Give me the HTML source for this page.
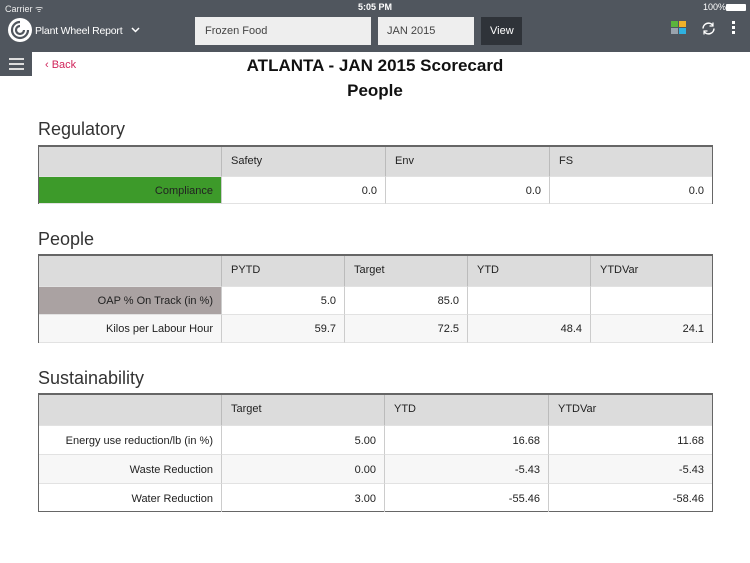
<!DOCTYPE html>
<html><head><meta charset="utf-8"><style>
*{margin:0;padding:0;box-sizing:border-box}
body{width:750px;height:563px;background:#fff;font-family:"Liberation Sans",Arial,sans-serif;position:relative;overflow:hidden;color:#222}
.bar{position:absolute;left:0;top:0;width:750px;height:52px;background:#50565e}
.abs{position:absolute}
.tbl{position:absolute;border:1px solid #666;border-top:2px solid #666}
.c{position:absolute;font-size:11px;line-height:1;border-right:1px solid #ccc;border-bottom:1px solid #e2e2e2}
.h{background:#dcdcdc;padding:9px 0 0 9px;border-right:1px solid #bbb}
.r{text-align:right;padding-right:8px}
h2{position:absolute;font-weight:normal;font-size:18px;color:#333;left:38px}
</style></head><body>
<div class="bar"></div>
<div class="abs" style="left:0;top:52px;width:32px;height:24px;background:#50565e"></div>
<div class="abs" style="left:9px;top:58px;width:15px;height:2px;background:#ddd;box-shadow:0 5px 0 #ddd,0 10px 0 #ddd"></div>
<div class="abs" style="left:5px;top:2px;font-size:9px;color:#eee">Carrier ᯤ</div>
<div class="abs" style="left:358px;top:2px;font-size:9px;color:#fff;font-weight:bold">5:05 PM</div>
<div class="abs" style="left:703px;top:2px;font-size:9px;color:#fff">100%</div>
<div class="abs" style="left:726px;top:4px;width:20px;height:7px;background:#fff;border-radius:1px"></div>
<svg class="abs" style="left:7px;top:17px" width="26" height="26" viewBox="0 0 26 26"><circle cx="13" cy="13" r="12" fill="#fff"/><path d="M13 5a8 8 0 1 0 8 8M13 9a4 4 0 1 0 4 4" stroke="#50565e" stroke-width="2.2" fill="none"/></svg>
<div class="abs" style="left:35px;top:25px;font-size:10.5px;color:#fff;letter-spacing:-0.2px">Plant Wheel Report</div>
<svg class="abs" style="left:131px;top:27px" width="9" height="6"><path d="M1 1l3.5 3.5L8 1" stroke="#fff" stroke-width="1.5" fill="none"/></svg>
<div class="abs" style="left:195px;top:17px;width:176px;height:28px;background:#eee;font-size:11px;color:#444;padding:8px 0 0 10px">Frozen Food</div>
<div class="abs" style="left:378px;top:17px;width:96px;height:28px;background:#eee;font-size:11px;color:#444;padding:8px 0 0 9px">JAN 2015</div>
<div class="abs" style="left:481px;top:17px;width:41px;height:28px;background:#2f3339;font-size:11px;color:#fff;padding:8px 0 0 9px">View</div>
<div class="abs" style="left:671px;top:21px;width:7px;height:6px;background:#5bb53c"></div>
<div class="abs" style="left:679px;top:21px;width:7px;height:6px;background:#f0b12a"></div>
<div class="abs" style="left:671px;top:28px;width:7px;height:6px;background:#9aa3ad"></div>
<div class="abs" style="left:679px;top:28px;width:7px;height:6px;background:#2fb1e0"></div>
<svg class="abs" style="left:701px;top:21px" width="15" height="15" viewBox="0 0 15 15"><path d="M2 7.5A5.5 5.5 0 0 1 12 4.5M13 7.5A5.5 5.5 0 0 1 3 10.5" stroke="#fff" stroke-width="1.5" fill="none"/><path d="M12 1.5v3.5h-3.5M3 13.5v-3.5h3.5" stroke="#fff" stroke-width="1.2" fill="none"/></svg>
<div class="abs" style="left:732px;top:21px;width:3px;height:3px;background:#fff;box-shadow:0 5px 0 #fff,0 10px 0 #fff"></div>
<div class="abs" style="left:45px;top:59px;font-size:11px;color:#d0245a">‹ Back</div>
<div class="abs" style="left:0;top:56px;width:750px;text-align:center;font-size:17px;font-weight:bold;color:#111">ATLANTA - JAN 2015 Scorecard</div>
<div class="abs" style="left:0;top:81px;width:750px;text-align:center;font-size:17px;font-weight:bold;color:#111">People</div>

<h2 style="top:119px">Regulatory</h2>
<div class="tbl" style="left:38px;top:145px;width:675px;height:59px">
<div class="c h" style="left:0;top:0;width:183px;height:30px"></div>
<div class="c h" style="left:183px;top:0;width:164px;height:30px">Safety</div>
<div class="c h" style="left:347px;top:0;width:164px;height:30px">Env</div>
<div class="c h" style="left:511px;top:0;width:162px;height:30px;border-right:0">FS</div>
<div class="c r" style="left:0;top:30px;width:183px;height:27px;background:#3d9a2a;padding-top:9px">Compliance</div>
<div class="c r" style="left:183px;top:30px;width:164px;height:27px;padding-top:9px">0.0</div>
<div class="c r" style="left:347px;top:30px;width:164px;height:27px;padding-top:9px">0.0</div>
<div class="c r" style="left:511px;top:30px;width:162px;height:27px;padding-top:9px;border-right:0">0.0</div>
</div>

<h2 style="top:229px">People</h2>
<div class="tbl" style="left:38px;top:254px;width:675px;height:89px">
<div class="c h" style="left:0;top:0;width:183px;height:31px"></div>
<div class="c h" style="left:183px;top:0;width:123px;height:31px">PYTD</div>
<div class="c h" style="left:306px;top:0;width:123px;height:31px">Target</div>
<div class="c h" style="left:429px;top:0;width:123px;height:31px">YTD</div>
<div class="c h" style="left:552px;top:0;width:121px;height:31px;border-right:0">YTDVar</div>
<div class="c r" style="left:0;top:31px;width:183px;height:28px;background:#aaa2a2;padding-top:9px">OAP % On Track (in %)</div>
<div class="c r" style="left:183px;top:31px;width:123px;height:28px;padding-top:9px">5.0</div>
<div class="c r" style="left:306px;top:31px;width:123px;height:28px;padding-top:9px">85.0</div>
<div class="c r" style="left:429px;top:31px;width:123px;height:28px"></div>
<div class="c r" style="left:552px;top:31px;width:121px;height:28px;border-right:0"></div>
<div class="c r" style="left:0;top:59px;width:183px;height:28px;background:#f7f7f7;padding-top:9px">Kilos per Labour Hour</div>
<div class="c r" style="left:183px;top:59px;width:123px;height:28px;background:#f7f7f7;padding-top:9px">59.7</div>
<div class="c r" style="left:306px;top:59px;width:123px;height:28px;background:#f7f7f7;padding-top:9px">72.5</div>
<div class="c r" style="left:429px;top:59px;width:123px;height:28px;background:#f7f7f7;padding-top:9px">48.4</div>
<div class="c r" style="left:552px;top:59px;width:121px;height:28px;background:#f7f7f7;padding-top:9px;border-right:0">24.1</div>
</div>

<h2 style="top:368px">Sustainability</h2>
<div class="tbl" style="left:38px;top:393px;width:675px;height:119px">
<div class="c h" style="left:0;top:0;width:183px;height:31px"></div>
<div class="c h" style="left:183px;top:0;width:163px;height:31px">Target</div>
<div class="c h" style="left:346px;top:0;width:164px;height:31px">YTD</div>
<div class="c h" style="left:510px;top:0;width:163px;height:31px;border-right:0">YTDVar</div>
<div class="c r" style="left:0;top:31px;width:183px;height:29px;padding-top:10px">Energy use reduction/lb (in %)</div>
<div class="c r" style="left:183px;top:31px;width:163px;height:29px;padding-top:10px">5.00</div>
<div class="c r" style="left:346px;top:31px;width:164px;height:29px;padding-top:10px">16.68</div>
<div class="c r" style="left:510px;top:31px;width:163px;height:29px;padding-top:10px;border-right:0">11.68</div>
<div class="c r" style="left:0;top:60px;width:183px;height:29px;background:#f7f7f7;padding-top:10px">Waste Reduction</div>
<div class="c r" style="left:183px;top:60px;width:163px;height:29px;background:#f7f7f7;padding-top:10px">0.00</div>
<div class="c r" style="left:346px;top:60px;width:164px;height:29px;background:#f7f7f7;padding-top:10px">-5.43</div>
<div class="c r" style="left:510px;top:60px;width:163px;height:29px;background:#f7f7f7;padding-top:10px;border-right:0">-5.43</div>
<div class="c r" style="left:0;top:89px;width:183px;height:28px;padding-top:10px;border-bottom:0">Water Reduction</div>
<div class="c r" style="left:183px;top:89px;width:163px;height:28px;padding-top:10px;border-bottom:0">3.00</div>
<div class="c r" style="left:346px;top:89px;width:164px;height:28px;padding-top:10px;border-bottom:0">-55.46</div>
<div class="c r" style="left:510px;top:89px;width:163px;height:28px;padding-top:10px;border-right:0;border-bottom:0">-58.46</div>
</div>
</body></html>
